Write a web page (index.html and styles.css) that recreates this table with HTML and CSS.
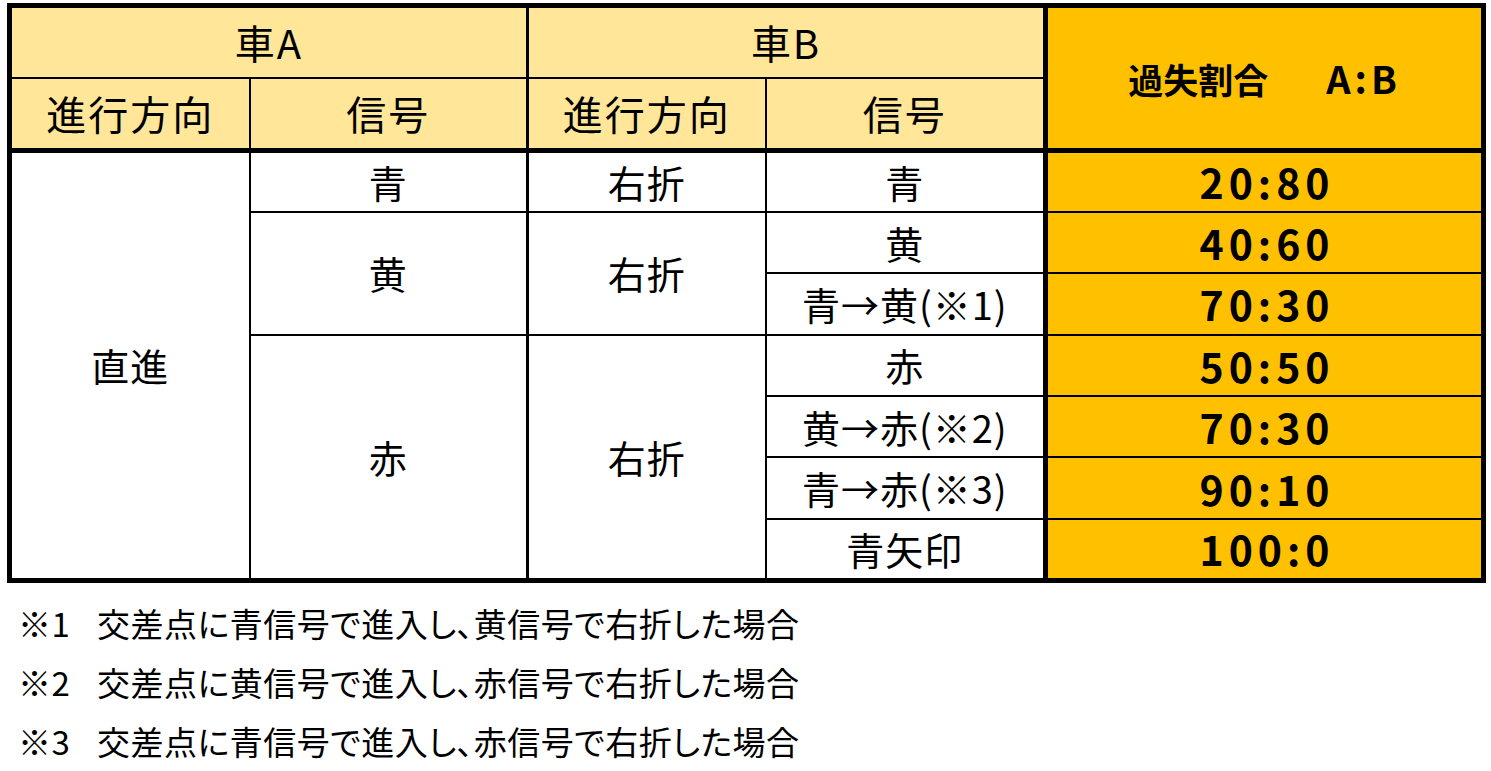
FILE: index.html
```html
<!DOCTYPE html>
<html lang="ja">
<head>
<meta charset="utf-8">
<title>過失割合</title>
<link rel="stylesheet" href="styles.css">
</head>
<body>
<div class="page">
  <table class="ratio">
    <colgroup>
      <col class="c1"><col class="c2"><col class="c3"><col class="c4"><col class="c5">
    </colgroup>
    <thead>
      <tr class="h1">
        <th colspan="2" class="hd split">車A</th>
        <th colspan="2" class="hd">車B</th>
        <th rowspan="2" class="rate rate-head">過失割合<span class="ab">A:B</span></th>
      </tr>
      <tr class="h2">
        <th class="hd">進行方向</th>
        <th class="hd split">信号</th>
        <th class="hd">進行方向</th>
        <th class="hd">信号</th>
      </tr>
    </thead>
    <tbody>
      <tr class="r">
        <td rowspan="7">直進</td>
        <td class="split">青</td>
        <td>右折</td>
        <td>青</td>
        <td class="rate">20:80</td>
      </tr>
      <tr class="r">
        <td rowspan="2" class="split">黄</td>
        <td rowspan="2">右折</td>
        <td>黄</td>
        <td class="rate">40:60</td>
      </tr>
      <tr class="r">
        <td>青→黄(※1)</td>
        <td class="rate">70:30</td>
      </tr>
      <tr class="r">
        <td rowspan="4" class="split">赤</td>
        <td rowspan="4">右折</td>
        <td>赤</td>
        <td class="rate">50:50</td>
      </tr>
      <tr class="r">
        <td>黄→赤(※2)</td>
        <td class="rate">70:30</td>
      </tr>
      <tr class="r">
        <td>青→赤(※3)</td>
        <td class="rate">90:10</td>
      </tr>
      <tr class="r">
        <td>青矢印</td>
        <td class="rate">100:0</td>
      </tr>
    </tbody>
  </table>
  <ul class="notes">
    <li><span class="mark">※1</span>交差点に青信号で進入し、黄信号で右折した場合</li>
    <li><span class="mark">※2</span>交差点に黄信号で進入し、赤信号で右折した場合</li>
    <li><span class="mark">※3</span>交差点に青信号で進入し、赤信号で右折した場合</li>
  </ul>
</div>
</body>
</html>
```

FILE: styles.css
```css
html, body {
  margin: 0;
  padding: 0;
  background: #fff;
}
body {
  font-family: "Noto Sans CJK JP", "Noto Sans", sans-serif;
  color: #000;
}
.page {
  padding: 3px 0 0 7px;
}
.ratio {
  border-collapse: collapse;
  table-layout: fixed;
  width: 1478px;
  border: 5px solid #000;
}
.c1 { width: 240px; }
.c2 { width: 278px; }
.c3 { width: 238px; }
.c4 { width: 280px; }
.c5 { width: 438px; }
.ratio th,
.ratio td {
  border: 2px solid #000;
  padding: 0;
  text-align: center;
  vertical-align: middle;
  font-size: 38px;
  font-weight: 400;
  line-height: 1;
  letter-spacing: 1px;
}
.ratio .split {
  border-right-width: 3px;
}
.h1 { height: 72px; }
.h2 { height: 73px; }
.h2 th { border-bottom-width: 5px; }
.r { height: 61.4px; }
.ratio .hd {
  background: #ffe699;
  font-size: 40px;
  letter-spacing: 2px;
}
.ratio .rate {
  background: #ffc000;
  border-left-width: 5px;
  font-weight: 700;
  font-size: 41px;
  letter-spacing: 5px;
  padding-left: 5px;
}
.ratio .rate-head {
  font-size: 35px;
  letter-spacing: 0;
  padding-left: 0;
  border-bottom-width: 5px;
}
.ab {
  display: inline-block;
  margin-left: 58px;
  font-size: 38px;
  letter-spacing: 4px;
}
.notes {
  list-style: none;
  margin: 11px 0 0 11px;
  padding: 0;
  font-size: 33px;
  line-height: 59px;
  letter-spacing: 0.5px;
  font-feature-settings: "palt";
}
.notes .mark {
  display: inline-block;
  width: 79px;
  font-feature-settings: normal;
}
```
